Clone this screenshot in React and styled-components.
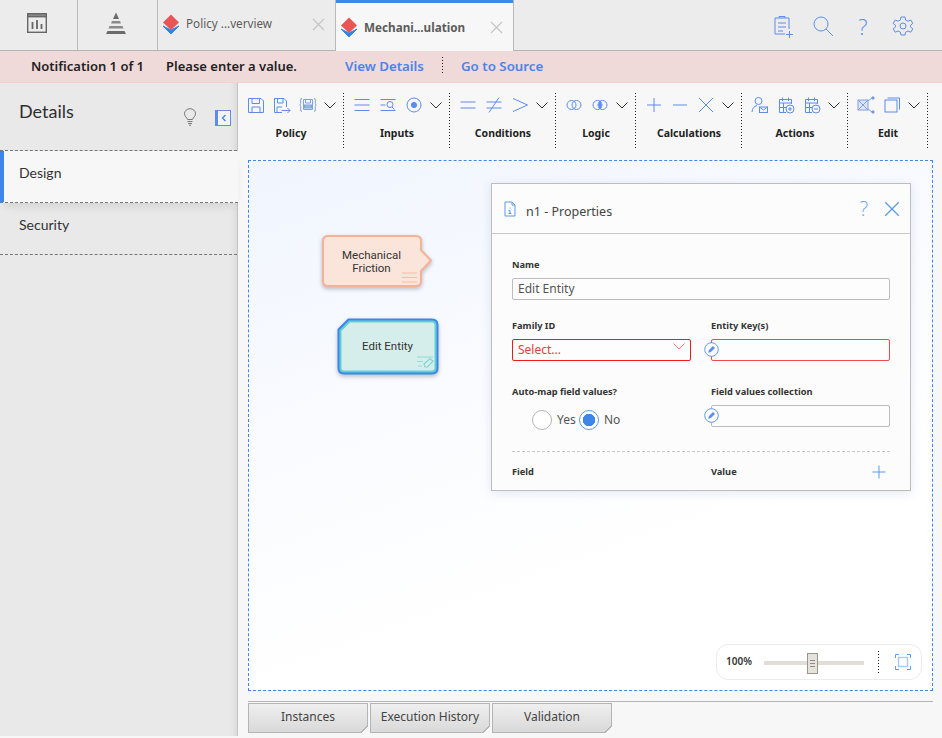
import React from "react";
import styled, { createGlobalStyle } from "styled-components";

const BLUE = "#5b8cee";
const FONT = `"Noto Sans", "Open Sans", sans-serif`;

const GlobalStyle = createGlobalStyle`
  html, body {
    margin: 0;
    padding: 0;
    height: 100%;
    overflow: hidden;
    background: #f7f7f7;
    font-family: ${FONT};
    color: #2b2b2b;
  }
  * { box-sizing: border-box; }
`;

function Glyph({ size = 22, view = 22, color = BLUE, sw = 1, children }) {
  return (
    <svg width={size} height={size} viewBox={`0 0 ${view} ${view}`} fill="none" stroke={color} strokeWidth={sw}>
      {children}
    </svg>
  );
}

const DiamondLogo = () => (
  <svg width="18" height="21" viewBox="0 0 18 21">
    <path d="M1 12 L9 20 L17 12 L9 16 Z" fill="#2f86e6" stroke="#2f86e6" />
    <path d="M9 0.5 L17 8.5 L9 16 L1 8.5 Z" fill="#e95454" />
  </svg>
);

const XMark = ({ size = 13, color = "#c4c4c4" }) => (
  <svg width={size} height={size} viewBox="0 0 13 13" stroke={color} strokeWidth="1.1">
    <path d="M1 1 L12 12 M12 1 L1 12" />
  </svg>
);

const Chevron = ({ color = "#333", w = 12 }) => (
  <svg width={w} height="7" viewBox="0 0 12 7" fill="none" stroke={color} strokeWidth="1">
    <path d="M0.5 0.5 L6 6 L11.5 0.5" />
  </svg>
);

const Pencil = () => (
  <PencilBadge>
    <svg width="15" height="15" viewBox="0 0 15 15">
      <circle cx="7.5" cy="7.5" r="6.8" fill="#fff" stroke="#5b9bee" />
      <path d="M4.6 10.4 L5.2 8.1 L9 4.3 L10.7 6 L6.9 9.8 Z" fill="#5b8cee" stroke="#5b8cee" strokeWidth="0.5" />
    </svg>
  </PencilBadge>
);

const toolIcons = {
  save: (
    <Glyph>
      <path d="M3.5 4.5 H16 L18.5 7 V18.5 H3.5 Z M7 4.5 V9.5 H14.5 V4.5 M7 18.5 V13 H15 V18.5" />
    </Glyph>
  ),
  saveAs: (
    <Glyph>
      <path d="M15.5 13 V7 L13 4.5 H3.5 V18.5 H11 M6.5 4.5 V9 H12 V4.5 M6 18 V13 H11" />
      <path d="M10.5 16.5 H19 M16.5 14 L19 16.5 L16.5 19" />
    </Glyph>
  ),
  saveBraces: (
    <Glyph color="#7f9fe8">
      <path d="M5 4.5 Q3.7 4.5 3.7 6 V9.5 L3 11 L3.7 12.5 V16 Q3.7 17.5 5 17.5 M17 4.5 Q18.3 4.5 18.3 6 V9.5 L19 11 L18.3 12.5 V16 Q18.3 17.5 17 17.5" />
      <path d="M6.5 5.5 H15.5 V15.5 H6.5 Z M8.5 5.5 V9 H13.5 V5.5" />
      <rect x="7.5" y="11" width="7" height="3" fill="#9db6ee" />
    </Glyph>
  ),
  lines: (
    <Glyph>
      <path d="M3.5 5.5 H18.5 M3.5 11 H18.5 M3.5 16.5 H18.5" />
    </Glyph>
  ),
  searchLines: (
    <Glyph>
      <path d="M3.5 5.5 H18.5 M3.5 11 H8.5 M3.5 16.5 H18.5" />
      <circle cx="13" cy="10.5" r="3" />
      <path d="M15 13 L17.5 15.5" />
    </Glyph>
  ),
  target: (
    <Glyph>
      <circle cx="11" cy="11" r="7" />
      <circle cx="11" cy="11" r="2.6" fill={BLUE} />
    </Glyph>
  ),
  equal: (
    <Glyph>
      <path d="M3.5 8 H18.5 M3.5 14 H18.5" />
    </Glyph>
  ),
  notEqual: (
    <Glyph>
      <path d="M3.5 8 H18.5 M3.5 14 H18.5 M16 3.5 L6 18.5" />
    </Glyph>
  ),
  greater: (
    <Glyph>
      <path d="M4 4.5 L18.5 11 L4 17.5" />
    </Glyph>
  ),
  venn: (
    <Glyph>
      <circle cx="8.5" cy="11" r="4.5" />
      <circle cx="13.5" cy="11" r="4.5" />
    </Glyph>
  ),
  vennFill: (
    <Glyph>
      <circle cx="8.5" cy="11" r="4.5" />
      <circle cx="13.5" cy="11" r="4.5" />
      <path d="M11 7.2 Q13.4 11 11 14.8 Q8.6 11 11 7.2 Z" fill={BLUE} />
    </Glyph>
  ),
  plus: (
    <Glyph>
      <path d="M4 11 H18 M11 4 V18" />
    </Glyph>
  ),
  minus: (
    <Glyph>
      <path d="M4 11 H18" />
    </Glyph>
  ),
  times: (
    <Glyph>
      <path d="M4 4 L18 18 M18 4 L4 18" />
    </Glyph>
  ),
  userMail: (
    <Glyph>
      <circle cx="9.5" cy="7" r="3.5" />
      <path d="M3 18 Q3.5 12.5 8 11.5" />
      <rect x="10.5" y="13" width="8" height="5.5" />
      <path d="M10.5 13 L14.5 16 L18.5 13" />
    </Glyph>
  ),
  calPlus: (
    <Glyph>
      <path d="M11 18.5 H4.5 V5.5 H16.5 V10 M4.5 9 H16.5 M7.5 3.5 V7 M13.5 3.5 V7 M8.5 9 V18 M4.5 13.5 H11" />
      <circle cx="15" cy="15" r="4" />
      <path d="M13 15 H17 M15 13 V17" />
    </Glyph>
  ),
  calMinus: (
    <Glyph>
      <path d="M11 18.5 H4.5 V5.5 H16.5 V10 M4.5 9 H16.5 M7.5 3.5 V7 M13.5 3.5 V7 M8.5 9 V18 M4.5 13.5 H11" />
      <circle cx="15" cy="15" r="4" />
      <path d="M13 15 H17" />
    </Glyph>
  ),
  shapeLink: (
    <Glyph color="#7f9fe8">
      <rect x="3" y="6" width="10" height="10" fill="#dfe5f8" />
      <path d="M3 6 L13 16 M13 6 L3 16 M13 7 L17 4 M13 15 L17 18" />
      <circle cx="18" cy="4" r="1.2" fill={BLUE} />
      <circle cx="18" cy="18" r="1.2" fill={BLUE} />
    </Glyph>
  ),
  copyBox: (
    <Glyph>
      <rect x="4" y="6" width="12" height="12" />
      <path d="M6.5 4 H18.5 V15.5" />
    </Glyph>
  ),
};

const toolGroups = [
  { label: "Policy", width: 106, icons: ["save", "saveAs", "saveBraces"] },
  { label: "Inputs", width: 106, icons: ["lines", "searchLines", "target"] },
  { label: "Conditions", width: 106, icons: ["equal", "notEqual", "greater"] },
  { label: "Logic", width: 80, icons: ["venn", "vennFill"] },
  { label: "Calculations", width: 106, icons: ["plus", "minus", "times"] },
  { label: "Actions", width: 106, icons: ["userMail", "calPlus", "calMinus"] },
  { label: "Edit", width: 80, icons: ["shapeLink", "copyBox"] },
];

export default function App() {
  return (
    <Page>
      <GlobalStyle />
      <TabBar>
        <IconTab $width={78}>
          <svg width="20" height="20" viewBox="0 0 20 20" fill="none" stroke="#666" strokeWidth="1.4">
            <rect x="0.7" y="0.7" width="18.6" height="18.6" />
            <rect x="0.7" y="0.7" width="18.6" height="3" fill="#888" />
            <path d="M5.5 16 V9 M10 16 V7 M14.5 16 V11" strokeWidth="1.8" />
          </svg>
        </IconTab>
        <IconTab $width={80}>
          <svg width="24" height="23" viewBox="0 0 24 23" fill="#6b6b6b">
            <path d="M12 0.5 L15 7 H9 Z" />
            <path d="M8 9 H16 L17 11.5 H7 Z" fill="#8a8a8a" />
            <path d="M5.5 14 H18.5 L19.5 16.5 H4.5 Z" fill="#8a8a8a" />
            <path d="M3.5 19 H20.5 L22 22 H2 Z" />
          </svg>
        </IconTab>
        <DocTab>
          <DiamondLogo />
          <TabTitle>Policy ...verview</TabTitle>
          <TabClose><XMark /></TabClose>
        </DocTab>
        <DocTab $active>
          <DiamondLogo />
          <TabTitle $active>Mechani...ulation</TabTitle>
          <TabClose><XMark /></TabClose>
        </DocTab>
        <TabTools>
          <Glyph size={24} view={24}>
            <path d="M14 20 H4 V4 H18 V15 M8 4 V2.5 H14 V4 M7 9 H15 M7 13 H15 M7 17 H12" />
            <path d="M15 20.5 H22 M18.5 17 V24" />
          </Glyph>
          <Glyph size={24} view={24}>
            <circle cx="10" cy="10" r="7" />
            <path d="M15 15 L22 22" />
          </Glyph>
          <HelpMark $size={22}>?</HelpMark>
          <Glyph size={24} view={24}>
            <path d="M10 3 H14 L14.6 6 L17 7.2 L19.8 6 L21.8 9.4 L19.5 11.3 V12.9 L21.8 14.8 L19.8 18.2 L17 17 L14.6 18.2 L14 21 H10 L9.4 18.2 L7 17 L4.2 18.2 L2.2 14.8 L4.5 12.9 V11.3 L2.2 9.4 L4.2 6 L7 7.2 L9.4 6 Z" />
            <circle cx="12" cy="12" r="3" />
          </Glyph>
        </TabTools>
      </TabBar>

      <NoticeBar>
        <NoticeText $width={135}>Notification 1 of 1</NoticeText>
        <NoticeText $width={179}>Please enter a value.</NoticeText>
        <NoticeLink>View Details</NoticeLink>
        <NoticeDivider />
        <NoticeLink>Go to Source</NoticeLink>
      </NoticeBar>

      <Body>
        <Sidebar>
          <SideHead>
            <SideTitle>Details</SideTitle>
            <svg width="14" height="18" viewBox="0 0 14 18" fill="none" stroke="#777" strokeWidth="1">
              <path d="M4.5 11.5 C4 9.5 1.5 8.5 1.5 5.7 A5.5 5 0 0 1 12.5 5.7 C12.5 8.5 10 9.5 9.5 11.5 Z M4.5 13.5 H9.5 M5 15.5 H9 M6 17.3 H8" />
            </svg>
            <Collapse>
              <svg width="6" height="8" viewBox="0 0 6 8" fill="none" stroke="#4f80ea" strokeWidth="1.4">
                <path d="M4.5 1 L1.5 4 L4.5 7" />
              </svg>
            </Collapse>
          </SideHead>
          <SideItem $active>Design</SideItem>
          <SideItem>Security</SideItem>
        </Sidebar>

        <Main>
          <Toolbar>
            {toolGroups.map((group) => (
              <ToolGroup key={group.label} $width={group.width}>
                <ToolRow>
                  {group.icons.map((name) => (
                    <ToolIcon key={name}>{toolIcons[name]}</ToolIcon>
                  ))}
                  <ToolChevron><Chevron /></ToolChevron>
                </ToolRow>
                <ToolLabel>{group.label}</ToolLabel>
              </ToolGroup>
            ))}
          </Toolbar>

          <Canvas>
            <FrictionNode>
              <NodeShape width="112" height="56" viewBox="0 0 112 56">
                <path
                  d="M6 2 H94 Q99 2 99 7 V16 L109 26.5 L99 37 V47 Q99 52 94 52 H6 Q1 52 1 47 V7 Q1 2 6 2 Z"
                  fill="#fbe5db"
                  stroke="#f6b296"
                  strokeWidth="2"
                />
                <path d="M80 39 H95 M80 43.5 H95 M80 48 H95" stroke="#f6bda5" strokeWidth="1" />
              </NodeShape>
              <NodeText $width={99} $top={2}>Mechanical<br />Friction</NodeText>
            </FrictionNode>

            <EntityNode>
              <NodeShape width="102" height="58" viewBox="0 0 102 58">
                <path
                  d="M11 0.5 H95 Q101.5 0.5 101.5 7 V50 Q101.5 56.5 95 56.5 H7 Q0.5 56.5 0.5 50 V11 Z"
                  fill="#3f86ec"
                />
                <path
                  d="M12.5 3.5 H95 Q98.5 3.5 98.5 7 V50 Q98.5 53.5 95 53.5 H7 Q3.5 53.5 3.5 50 V12.5 Z"
                  fill="#d6eeeb"
                  stroke="#63cfcf"
                  strokeWidth="2"
                />
                <path d="M80 39 H96 M80 43.5 H86 M81 48 H85" stroke="#8fdcd6" strokeWidth="1" />
                <path d="M88 49 L87 46 L93 40.5 L96 43 L90.5 49 Z" fill="#d6eeeb" stroke="#7fd6d0" strokeWidth="1.2" />
              </NodeShape>
              <NodeText $width={101} $top={3}>Edit Entity</NodeText>
            </EntityNode>

            <Panel>
              <PanelHead>
                <svg width="12" height="16" viewBox="0 0 12 16" fill="none" stroke="#5b9bee" strokeWidth="1">
                  <path d="M1 1 H8 L11 4 V15 H1 Z M8 1 V4 H11 M6 6.5 V7.5 M4.5 9.5 H6 V12.5 M4.5 12.5 H7.5" />
                </svg>
                <PanelTitle>n1 - Properties</PanelTitle>
                <PanelHelp>?</PanelHelp>
                <XMark size={16} color="#5b9bee" />
              </PanelHead>
              <PanelBody>
                <Field $span>
                  <FieldLabel>Name</FieldLabel>
                  <TextBox>Edit Entity</TextBox>
                </Field>
                <Field>
                  <FieldLabel>Family ID</FieldLabel>
                  <TextBox $error>
                    Select...
                    <SelectArrow><Chevron color="#f27b7b" /></SelectArrow>
                  </TextBox>
                </Field>
                <Field>
                  <FieldLabel>Entity Key(s)</FieldLabel>
                  <TextBox $error $soft>
                    <Pencil />
                  </TextBox>
                </Field>
                <Field>
                  <FieldLabel>Auto-map field values?</FieldLabel>
                  <RadioRow>
                    <Radio />
                    <RadioText>Yes</RadioText>
                    <Radio $checked />
                    <RadioText>No</RadioText>
                  </RadioRow>
                </Field>
                <Field>
                  <FieldLabel>Field values collection</FieldLabel>
                  <TextBox>
                    <Pencil />
                  </TextBox>
                </Field>
                <PanelRule />
                <ColumnHead>Field</ColumnHead>
                <ColumnHead>
                  Value
                  <AddButton>
                    <svg width="14" height="14" viewBox="0 0 14 14" stroke="#5b9bee" strokeWidth="1">
                      <path d="M0.5 7 H13.5 M7 0.5 V13.5" />
                    </svg>
                  </AddButton>
                </ColumnHead>
              </PanelBody>
            </Panel>

            <ZoomBox>
              <ZoomValue>100%</ZoomValue>
              <SliderTrack>
                <SliderThumb />
              </SliderTrack>
              <ZoomDivider />
              <svg width="16" height="16" viewBox="0 0 16 16" fill="none" stroke="#5b9bee" strokeWidth="1">
                <path d="M0.5 4 V0.5 H4 M12 0.5 H15.5 V4 M15.5 12 V15.5 H12 M4 15.5 H0.5 V12" />
                <rect x="3.5" y="3.5" width="9" height="9" stroke="#a9c8f5" strokeWidth="1.4" />
              </svg>
            </ZoomBox>
          </Canvas>

          <BottomTabs>
            <BottomTab>Instances</BottomTab>
            <BottomTab>Execution History</BottomTab>
            <BottomTab>Validation</BottomTab>
          </BottomTabs>
        </Main>
      </Body>
    </Page>
  );
}

const Page = styled.div`
  width: 942px;
  height: 738px;
  display: flex;
  flex-direction: column;
  overflow: hidden;
`;

const TabBar = styled.div`
  height: 51px;
  display: flex;
  background: #ececec;
  border-bottom: 1px solid #b4b4b4;
`;
const IconTab = styled.div`
  width: ${(p) => p.$width}px;
  display: flex;
  align-items: center;
  justify-content: center;
  padding: 0 4px 4px 0;
  border-right: 1px solid #b9b9b9;
`;
const DocTab = styled.div`
  width: 178px;
  height: 51px;
  display: flex;
  align-items: center;
  padding: ${(p) => (p.$active ? "4px 10px 0 4px" : "0 10px 3px 4px")};
  border-right: 1px solid #b9b9b9;
  background: ${(p) => (p.$active ? "#f7f7f7" : "transparent")};
  box-shadow: ${(p) => (p.$active ? "inset 0 3px 0 #3f86ec" : "none")};
`;
const TabTitle = styled.span`
  margin: 0 0 2px 6px;
  font-size: 11.7px;
  font-weight: ${(p) => (p.$active ? 700 : 400)};
  color: #5c5c5c;
  white-space: nowrap;
`;
const TabClose = styled.span`
  margin-left: auto;
  display: flex;
`;
const TabTools = styled.div`
  margin-left: auto;
  display: flex;
  align-items: center;
  gap: 16px;
  padding: 1px 27px 0 0;
`;
const HelpMark = styled.span`
  width: 24px;
  text-align: center;
  font-size: ${(p) => p.$size}px;
  line-height: 1;
  color: ${BLUE};
  font-family: "Open Sans", sans-serif;
  font-weight: 300;
`;

const NoticeBar = styled.div`
  height: 32px;
  display: flex;
  align-items: center;
  padding: 0 0 2px 31px;
  background: #efd9d9;
  border-bottom: 1px solid #f3cfcf;
  font-size: 13px;
  font-weight: 600;
`;
const NoticeText = styled.span`
  width: ${(p) => p.$width}px;
  color: #222;
`;
const NoticeLink = styled.span`
  font-size: 13.3px;
  color: #4c83e8;
`;
const NoticeDivider = styled.span`
  width: 1px;
  height: 17px;
  margin: 0 18px;
  background: repeating-linear-gradient(#222 0 1px, transparent 1px 3px);
`;

const Body = styled.div`
  flex: 1;
  display: flex;
  min-height: 0;
`;
const Sidebar = styled.div`
  width: 238px;
  margin-bottom: 2px;
  background: #e9e9e9;
  border-right: 1px solid #c4c4c4;
  box-shadow: inset -8px 0 8px -8px rgba(0, 0, 0, 0.12);
`;
const SideHead = styled.div`
  height: 68px;
  display: flex;
  align-items: flex-start;
  padding: 17px 6px 0 19px;
  border-bottom: 1px dashed #777;
  svg { margin-top: 8px; }
`;
const SideTitle = styled.div`
  flex: 1;
  font-family: Lato, sans-serif;
  font-size: 18px;
  line-height: 22px;
  color: #2f2f2f;
`;
const Collapse = styled.div`
  width: 16px;
  height: 16px;
  margin: 10px 0 0 18px;
  display: flex;
  align-items: center;
  justify-content: center;
  background: #f4f4f4;
  border: 1px solid #5b8cee;
  border-left-width: 3px;
  svg { margin-top: 0; }
`;
const SideItem = styled.div`
  height: 52px;
  display: flex;
  align-items: center;
  padding: 0 0 8px ${(p) => (p.$active ? "15px" : "19px")};
  margin-right: ${(p) => (p.$active ? "-1px" : "0")};
  position: relative;
  font-family: Lato, sans-serif;
  font-size: 14px;
  color: #333;
  background: ${(p) => (p.$active ? "#f7f7f7" : "transparent")};
  border-left: ${(p) => (p.$active ? "4px solid #3f86ec" : "none")};
  border-bottom: 1px dashed #777;
  box-shadow: ${(p) => (p.$active ? "0 6px 10px -4px rgba(0,0,0,0.12)" : "none")};
`;

const Main = styled.div`
  flex: 1;
  min-width: 0;
  display: flex;
  flex-direction: column;
`;
const Toolbar = styled.div`
  height: 77px;
  display: flex;
  padding-top: 10px;
`;
const ToolGroup = styled.div`
  width: ${(p) => p.$width}px;
  height: 57px;
  padding-left: 5px;
  background: repeating-linear-gradient(#222 0 1px, transparent 1px 3px) right top / 1px 100% no-repeat;
`;
const ToolRow = styled.div`
  display: flex;
  align-items: center;
  height: 24px;
`;
const ToolIcon = styled.span`
  width: 26px;
  display: flex;
  justify-content: center;
`;
const ToolChevron = styled.span`
  width: 18px;
  display: flex;
  justify-content: center;
`;
const ToolLabel = styled.div`
  margin: 9px 0 0 -5px;
  text-align: center;
  font-size: 10.5px;
  line-height: 14px;
  font-weight: 700;
  color: #222;
`;

const Canvas = styled.div`
  position: relative;
  height: 531px;
  margin: 0 9px 0 10px;
  border: 1px dashed #3f87ef;
  background: linear-gradient(160deg, #f0f5fe 0%, #fbfcff 45%, #fff 70%);
`;
const FrictionNode = styled.div`
  position: absolute;
  left: 73px;
  top: 73px;
  width: 112px;
  height: 56px;
`;
const EntityNode = styled.div`
  position: absolute;
  left: 88px;
  top: 157px;
  width: 102px;
  height: 58px;
`;
const NodeShape = styled.svg`
  position: absolute;
  left: 0;
  top: 0;
  overflow: visible;
  filter: drop-shadow(0 2px 2px rgba(0, 0, 0, 0.25));
`;
const NodeText = styled.div`
  position: relative;
  width: ${(p) => p.$width}px;
  height: 54px;
  display: flex;
  align-items: center;
  justify-content: center;
  padding-top: ${(p) => p.$top}px;
  text-align: center;
  font-family: Roboto, sans-serif;
  font-size: 11.5px;
  line-height: 13.5px;
  color: #333;
`;

const Panel = styled.div`
  position: absolute;
  left: 242px;
  top: 22px;
  width: 420px;
  height: 308px;
  background: #fcfcfc;
  border: 1px solid #bdbdbd;
  box-shadow: 0 2px 10px rgba(120, 140, 180, 0.2);
`;
const PanelHead = styled.div`
  height: 50px;
  display: flex;
  align-items: center;
  padding: 0 10px 0 12px;
  border-bottom: 1px solid #c9c9c9;
`;
const PanelTitle = styled.div`
  flex: 1;
  margin: 5px 0 0 10px;
  font-size: 12.5px;
  color: #444;
`;
const PanelHelp = styled.span`
  width: 20px;
  margin-right: 10px;
  text-align: center;
  font-family: "Open Sans", sans-serif;
  font-size: 20px;
  font-weight: 300;
  line-height: 1;
  color: #6fa6ee;
`;
const PanelBody = styled.div`
  display: grid;
  grid-template-columns: 179px 179px;
  column-gap: 20px;
  row-gap: 24px;
  padding: 24px 20px 0;
`;
const Field = styled.div`
  grid-column: ${(p) => (p.$span ? "1 / -1" : "auto")};
  &:nth-child(1) { margin-bottom: -5px; }
`;
const FieldLabel = styled.div`
  height: 14px;
  margin-bottom: 6px;
  font-size: 9.25px;
  line-height: 14px;
  font-weight: 700;
  color: #333;
  white-space: nowrap;
`;
const TextBox = styled.div`
  position: relative;
  height: 22px;
  display: flex;
  align-items: center;
  padding: 0 0 2px 5px;
  font-size: 12px;
  color: ${(p) => (p.$error ? "#ef3a3a" : "#555")};
  background: #fdfdfd;
  border: 1px solid ${(p) => (p.$error ? (p.$soft ? "#ef4a4a" : "#ea1c1c") : "#bcbcbc")};
  border-radius: 2px;
`;
const SelectArrow = styled.span`
  position: absolute;
  right: 5px;
  top: 3px;
  display: flex;
`;
const PencilBadge = styled.span`
  position: absolute;
  left: -8px;
  top: 2px;
  display: flex;
`;
const RadioRow = styled.div`
  height: 30px;
  margin-bottom: -8px;
  display: flex;
  align-items: center;
  padding-left: 20px;
`;
const Radio = styled.span`
  width: 20px;
  height: 20px;
  flex: none;
  border-radius: 50%;
  background: ${(p) => (p.$checked ? "radial-gradient(circle, #3f86ec 0 6px, #fff 6.5px)" : "#fff")};
  border: 1px solid ${(p) => (p.$checked ? "#5b9bee" : "#b5b5b5")};
`;
const RadioText = styled.span`
  width: 22px;
  margin: 0 0 2px 5px;
  font-size: 12px;
  color: #555;
  &:last-child { width: auto; }
`;
const PanelRule = styled.div`
  grid-column: 1 / -1;
  height: 1px;
  border-top: 1px dashed #c8c8c8;
`;
const ColumnHead = styled.div`
  position: relative;
  height: 14px;
  margin-top: -11px;
  font-size: 9.25px;
  line-height: 14px;
  font-weight: 700;
  color: #333;
`;
const AddButton = styled.span`
  position: absolute;
  right: 4px;
  top: 0;
  display: flex;
`;

const ZoomBox = styled.div`
  position: absolute;
  right: 10px;
  bottom: 10px;
  width: 206px;
  height: 36px;
  display: flex;
  align-items: center;
  padding: 0 0 0 9px;
  background: #fff;
  border: 1px solid #ececec;
  border-radius: 12px;
`;
const ZoomValue = styled.span`
  width: 38px;
  margin-bottom: 2px;
  font-size: 10px;
  font-weight: 600;
  color: #333;
`;
const SliderTrack = styled.div`
  position: relative;
  width: 100px;
  height: 4px;
  margin-top: 2px;
  background: #e2ddd6;
`;
const SliderThumb = styled.span`
  position: absolute;
  left: 43px;
  top: -8px;
  width: 11px;
  height: 21px;
  background: repeating-linear-gradient(#8f8f8f 0 1px, transparent 1px 3px) center / 5px 7px no-repeat, #e6e2dc;
  border: 1px solid #9a958d;
`;
const ZoomDivider = styled.span`
  width: 1px;
  height: 22px;
  margin: 0 16px 0 14px;
  background: repeating-linear-gradient(#222 0 1px, transparent 1px 3px);
`;

const BottomTabs = styled.div`
  display: flex;
  gap: 2px;
  margin: 10px 9px 0 10px;
  padding-top: 1px;
  border-top: 1px solid #b4b4b4;
`;
const BottomTab = styled.div`
  position: relative;
  width: 120px;
  height: 30px;
  display: flex;
  align-items: center;
  justify-content: center;
  padding-bottom: 3px;
  font-size: 12px;
  color: #444;
  background: linear-gradient(#efefef, #d9d9d9);
  border: 1px solid #b4b4b4;
  &::after {
    content: "";
    position: absolute;
    right: -1px;
    bottom: -1px;
    width: 7px;
    height: 7px;
    background: linear-gradient(135deg, transparent 42%, #b4b4b4 42% 56%, #f7f7f7 56%);
  }
`;
